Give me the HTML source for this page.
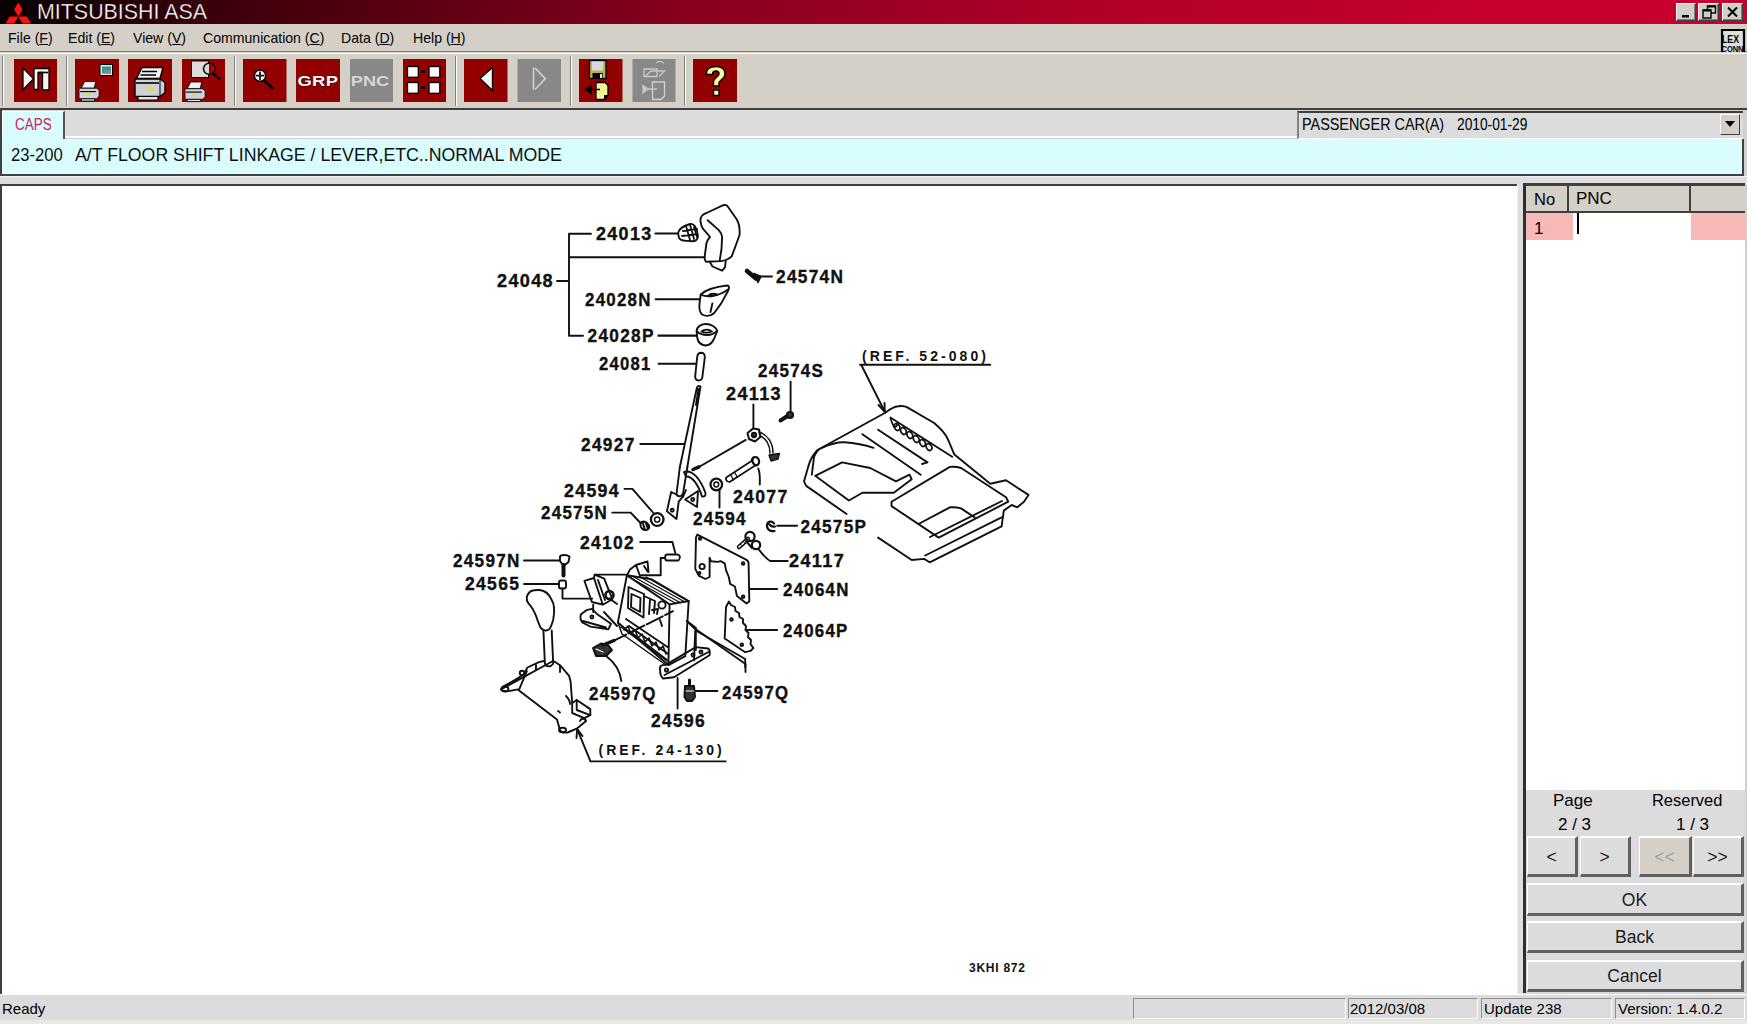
<!DOCTYPE html>
<html><head><meta charset="utf-8">
<style>
*{margin:0;padding:0;box-sizing:border-box}
html,body{width:1747px;height:1024px;overflow:hidden;background:#d4d0c8;font-family:"Liberation Sans",sans-serif;color:#000}
.a{position:absolute}
#title{left:0;top:0;width:1747px;height:24px;background:linear-gradient(90deg,#080000 0%,#3a000a 12%,#8a001f 40%,#b40029 65%,#c4002c 85%,#c8002e 100%)}
#title .t{left:36.5px;top:0px;font-size:22px;color:#fff;line-height:24px;-webkit-text-stroke:0.5px rgba(30,0,8,0.7);transform:scaleX(0.973);transform-origin:0 0}
.wb{top:3px;width:20px;height:18px;background:#d4d0c8;border-top:1px solid #fff;border-left:1px solid #fff;border-right:1px solid #404040;border-bottom:1px solid #404040;box-shadow:inset -1px -1px 0 #808080}
#menu{left:0;top:24px;width:1747px;height:28px;background:#d4d0c8;border-bottom:1px solid #808080}
#menu span{position:absolute;top:4px;font-size:15px;line-height:20px;transform:scaleX(0.94);transform-origin:0 0}
.tb{top:59px;width:43px;height:43px;background:#8b0000}
.tb.g{background:#8c8c8c}
.sep{top:56px;width:2px;height:50px;border-left:1px solid #808080;border-right:1px solid #fff}
.btn{background:#dcdcdc;border-top:2px solid #fff;border-left:1px solid #fff;border-right:3px solid #606060;border-bottom:3px solid #606060;font-size:17.5px;text-align:center;display:flex;align-items:center;justify-content:center;color:#202020;padding-top:2px}
.btn.dis{background:#d4d0c8;color:#a0a0a0}
.sp{top:998px;height:21px;border-top:1px solid #909090;border-left:1px solid #909090;border-bottom:1px solid #fff;border-right:1px solid #fff}
</style></head><body>
<div id="title" class="a">
  <svg class="a" style="left:4px;top:1px" width="28" height="23" viewBox="0 0 28 23">
    <polygon points="14.3,1.5 18.5,8.5 14.3,15.5 10.1,8.5" fill="#ff1010"/>
    <polygon points="14.3,15.5 10.1,22.5 1.5,22.5 5.7,15.5" fill="#ff1010"/>
    <polygon points="14.3,15.5 18.5,22.5 27,22.5 22.8,15.5" fill="#ff1010"/>
  </svg>
  <div class="a t">MITSUBISHI ASA</div>
  <div class="a wb" style="left:1676px"></div>
  <div class="a wb" style="left:1698px;width:21px"></div>
  <div class="a wb" style="left:1722px;width:21px"></div>
  <svg class="a" style="left:1676px;top:3px" width="68" height="18" viewBox="0 0 68 18">
    <rect x="6" y="12" width="7" height="2.5" fill="#000"/>
    <rect x="31.5" y="3" width="8" height="7" fill="none" stroke="#000" stroke-width="1.4"/>
    <rect x="31.5" y="2.5" width="8" height="2" fill="#000"/>
    <rect x="27" y="7" width="8" height="8" fill="#d4d0c8" stroke="#000" stroke-width="1.4"/>
    <rect x="27" y="6.5" width="8" height="2" fill="#000"/>
    <path d="M52,4.5 L61,13.5 M61,4.5 L52,13.5" stroke="#000" stroke-width="2"/>
  </svg>
</div>
<div id="menu" class="a">
  <span style="left:8px">File (<u>F</u>)</span>
  <span style="left:68px">Edit (<u>E</u>)</span>
  <span style="left:133px">View (<u>V</u>)</span>
  <span style="left:203px">Communication (<u>C</u>)</span>
  <span style="left:341px">Data (<u>D</u>)</span>
  <span style="left:413px">Help (<u>H</u>)</span>
  <svg class="a" style="left:1720px;top:4px" width="26" height="25" viewBox="0 0 26 25">
    <path d="M2,24 V2 H24 V24" fill="#dcdcdc" stroke="#000" stroke-width="2.2"/>
    <text x="2" y="15" font-family="Liberation Sans" font-weight="bold" font-size="10" textLength="17" lengthAdjust="spacingAndGlyphs" fill="#000">LEX</text>
    <text x="1.5" y="23.5" font-family="Liberation Sans" font-weight="bold" font-size="9" textLength="22" lengthAdjust="spacingAndGlyphs" fill="#000">CONN</text>
  </svg>
</div>
<!-- toolbar -->
<div class="a" style="left:0;top:53px;width:1747px;height:1px;background:#fff"></div>
<div class="a sep" style="left:2px"></div>
<div class="a sep" style="left:66px"></div>
<div class="a sep" style="left:234px"></div>
<div class="a sep" style="left:455px"></div>
<div class="a sep" style="left:570px"></div>
<div class="a sep" style="left:684px"></div>
<svg class="a" style="left:0;top:0" width="760" height="108" viewBox="0 0 760 108">
<g fill="#920000">
<rect x="14" y="59" width="43" height="43"/>
<rect x="75" y="59" width="44" height="43"/>
<rect x="128" y="59" width="44" height="43"/>
<rect x="182" y="59" width="43" height="43"/>
<rect x="243" y="59" width="43.5" height="43"/>
<rect x="296" y="59" width="44" height="43"/>
<rect x="403" y="59" width="43" height="43"/>
<rect x="464" y="59" width="43.5" height="43"/>
<rect x="579" y="59" width="43.5" height="43"/>
<rect x="693" y="59" width="44" height="43"/>
</g>
<g fill="#888">
<rect x="350" y="59" width="43" height="43"/>
<rect x="517.5" y="59" width="43.5" height="43"/>
<rect x="632.5" y="59" width="43" height="43"/>
</g>
<!-- exit icon -->
<path d="M23,68 L33.5,78.7 L23,89.8 Z" fill="#f4f4f4" stroke="#000" stroke-width="1.3"/>
<path d="M34,68.5 H49 V89.8 H42.5 V72.5 H38 V89.5 H34 Z" fill="#f4f4f4" stroke="#000" stroke-width="1.3"/>
<path d="M38.5,72.5 H48" stroke="#000" stroke-width="1.6"/>
<!-- print preview -->
<rect x="100" y="64.5" width="12.5" height="11" fill="#e8e8e8" stroke="#000" stroke-width="1"/>
<rect x="102" y="66.5" width="9" height="7" fill="#2a9a9a"/>
<rect x="104" y="70" width="7" height="3.5" fill="#7a8a90"/>
<g transform="translate(79,81.5) scale(0.56)">
<path d="M10,0 H30 L27,12 H4 Z" fill="#f0f0f0" stroke="#000" stroke-width="1.5"/>
<path d="M0,12 H32 L36,16 V26 L32,31 H0 Z" fill="#d0d0d8" stroke="#000" stroke-width="1.5"/>
<path d="M2,18 H30" stroke="#000" stroke-width="2"/><rect x="13" y="22" width="7" height="3" fill="#e0e020"/>
<path d="M4,31 H28 V35 H4 Z" fill="#e0e0e8" stroke="#000" stroke-width="1.5"/>
</g>
<!-- print -->
<g transform="translate(135,67.5)">
<path d="M7,0 H28 L25,11 H1.5 Z" fill="#f0f0f0" stroke="#000" stroke-width="1.4"/>
<path d="M7,4 H22 M5.5,7.5 H21" stroke="#000" stroke-width="1.5"/>
<path d="M0,11.5 H25 L30,15 V25 L25,29 H0 Z" fill="#cfcfd8" stroke="#000" stroke-width="1.4"/>
<path d="M25,11.5 V29" stroke="#000" stroke-width="1"/>
<path d="M1,15.5 H24" stroke="#000" stroke-width="1.6"/>
<rect x="13" y="20" width="5.5" height="2.8" fill="#e4e41a"/>
<path d="M3,29 H23 V32.5 H3 Z" fill="#e4e4ec" stroke="#000" stroke-width="1.2"/>
</g>
<!-- print w/ magnifier -->
<rect x="191.5" y="61" width="17" height="16.5" fill="#dcdcdc" stroke="#000" stroke-width="1"/>
<circle cx="209" cy="68.8" r="5.5" fill="#d8d8d8" stroke="#000" stroke-width="1.5"/>
<path d="M209,63.5 A5.3,5.3 0 0 1 209,74" fill="#960000"/>
<path d="M212.5,73 L220,79.5" stroke="#000" stroke-width="2.4"/>
<g transform="translate(185,82) scale(0.56)">
<path d="M10,0 H30 L27,12 H4 Z" fill="#f0f0f0" stroke="#000" stroke-width="1.5"/>
<path d="M0,12 H32 L36,16 V26 L32,31 H0 Z" fill="#d0d0d8" stroke="#000" stroke-width="1.5"/>
<path d="M2,18 H30" stroke="#000" stroke-width="2"/><rect x="13" y="22" width="7" height="3" fill="#e0e020"/>
<path d="M4,31 H28 V35 H4 Z" fill="#e0e0e8" stroke="#000" stroke-width="1.5"/>
</g>
<!-- zoom -->
<path d="M264,80.5 L273.5,89" stroke="#000" stroke-width="3"/>
<circle cx="260" cy="75.7" r="5.6" fill="#f4f4f4" stroke="#000" stroke-width="1.4"/>
<path d="M260,71.5 V80 M255.8,75.7 H264.2" stroke="#1a1a1a" stroke-width="1.8"/>
<!-- GRP / PNC -->
<text x="0" y="0" transform="translate(297.5,85.6) scale(1.32,1)" font-family="Liberation Sans" font-weight="bold" font-size="14" letter-spacing="0.2" fill="#f8f8f8" stroke="#200000" stroke-width="0.8" paint-order="stroke">GRP</text>
<text x="0" y="0" transform="translate(350.8,85.6) scale(1.3,1)" font-family="Liberation Sans" font-weight="bold" font-size="14" letter-spacing="0" fill="#d6d6d6">PNC</text>
<!-- 4 squares -->
<g fill="#fafafa" stroke="#000" stroke-width="1.3">
<rect x="407.5" y="66.5" width="10.8" height="10.8"/><rect x="429" y="66.5" width="10.8" height="10.8"/>
<rect x="407.5" y="82.5" width="10.8" height="10.8"/><rect x="429" y="82.5" width="10.8" height="10.8"/>
</g>
<path d="M421,71.8 L425,71.8 M421,87.8 H425" stroke="#000" stroke-width="2.5"/>
<!-- back -->
<path d="M480,78.4 L492.5,67.5 V90.5 Z" fill="#f4f4f4" stroke="#000" stroke-width="1.3"/>
<!-- fwd gray -->
<path d="M533.5,67.5 V89.8 M535,68 L545.3,78.6 L535,89.5" fill="none" stroke="#d0d0d0" stroke-width="1.6"/>
<!-- save -->
<rect x="589.5" y="60.5" width="16.5" height="18" fill="#b8b840" stroke="#000" stroke-width="1.3"/>
<rect x="592" y="61.5" width="11" height="9" fill="#d8d8e4"/>
<rect x="592.5" y="73" width="10.5" height="5.5" fill="#100018"/>
<rect x="600" y="74" width="2.3" height="4" fill="#e0e0f0"/>
<path d="M596,82.5 H605 L608,85.5 V95.5 L604.5,99.5 H596 Z" fill="#f4f49a" stroke="#000" stroke-width="1.3"/>
<path d="M604.5,99.5 V95.5 H608" fill="#000" stroke="#000" stroke-width="1"/>
<path d="M586,89.5 L591,85.5 V93.5 Z M590,89.5 H600" fill="#000" stroke="#000" stroke-width="1.5"/>
<!-- gray open -->
<path d="M644,69 H657 V76.5 H644 Z M645,76.5 L651,71 H664.5 L659,76.5" fill="none" stroke="#c8c8c8" stroke-width="1.3"/>
<path d="M656,63 C659,60.5 662,61 664,63.5" fill="none" stroke="#c8c8c8" stroke-width="1.2"/>
<path d="M652.5,82 H664.5 V96 L661,99.5 H652.5 Z" fill="none" stroke="#d0d0d0" stroke-width="1.3"/>
<path d="M643,85.5 L648,89 L643,93 Z M647,89 H657" fill="#c8c8c8" stroke="#c8c8c8" stroke-width="1.3"/>
<!-- help -->
<path d="M706.5,74.5 C706,68.5 711,66.5 716,66.5 C722.5,66.5 725.5,70 725,74.5 C724.5,78.5 720,80 719,82.5 V86 H713.5 V81.5 C714,77.5 719,77 719,74 C719,71.5 717.5,71 716,71 C714,71 712.5,72 712.5,74.5 Z" fill="#f8f8a0" stroke="#000" stroke-width="1.4"/>
<rect x="713.5" y="90" width="5.5" height="5.5" fill="#f8f8a0" stroke="#000" stroke-width="1.4"/>
</svg>
<!-- tab row -->
<div class="a" style="left:0;top:108px;width:1747px;height:2px;background:#404040"></div>
<div class="a" style="left:0;top:108px;width:2px;height:68px;background:#404040"></div>
<div class="a" style="left:65px;top:110px;width:1232px;height:28px;background:#dcdcdc;border-bottom:2px solid #fff"></div>
<div class="a" style="left:2px;top:111px;width:63px;height:30px;background:#d9fcfe;border-left:1px solid #fff;border-top:1px solid #fff;border-right:2px solid #505050"></div>
<div class="a" style="left:15px;top:114px;font-size:16px;line-height:22px;color:#d0205a;transform:scaleX(0.84);transform-origin:0 0">CAPS</div>
<!-- combo -->
<div class="a" style="left:1297px;top:111px;width:446px;height:28px;background:#dcdcdc;border-left:2px solid #808080;border-top:2px solid #404040;border-bottom:1px solid #fff"></div>
<div class="a" style="left:1302px;top:114px;font-size:16px;line-height:22px;transform:scaleX(0.9);transform-origin:0 0;white-space:pre">PASSENGER CAR(A)</div>
<div class="a" style="left:1457px;top:114px;font-size:16px;line-height:22px;transform:scaleX(0.86);transform-origin:0 0;white-space:pre">2010-01-29</div>
<div class="a" style="left:1720px;top:114px;width:20px;height:21px;background:#d4d0c8;border-top:1px solid #fff;border-left:1px solid #fff;border-right:1px solid #404040;border-bottom:1px solid #404040"></div>
<svg class="a" style="left:1724px;top:120px" width="12" height="8"><polygon points="1,1 11,1 6,7" fill="#000"/></svg>
<!-- cyan title bar -->
<div class="a" style="left:0;top:176px;width:1747px;height:8px;background:#dedede;border-top:1px solid #f4f4f4"></div>
<div class="a" style="left:2px;top:139px;width:1742px;height:37px;background:#d9fcfe;border-bottom:2px solid #404040;border-right:2px solid #404040"></div>
<div class="a" style="left:11px;top:143px;font-size:18px;line-height:24px;color:#101010;transform:scaleX(0.925);transform-origin:0 0;white-space:pre">23-200</div>
<div class="a" style="left:75px;top:143px;font-size:18px;line-height:24px;color:#101010;transform:scaleX(0.984);transform-origin:0 0;white-space:pre">A/T FLOOR SHIFT LINKAGE / LEVER,ETC..NORMAL MODE</div>
<!-- main diagram panel -->
<div class="a" style="left:0;top:184px;width:1517px;height:810px;background:#fff;border-top:2px solid #404040;border-left:2px solid #404040"></div>
<!--DIAGRAM--><svg class="a" style="left:0;top:0" width="1747" height="1024" viewBox="0 0 1747 1024">
<g font-family="Liberation Sans" font-weight="bold" font-size="17.5" letter-spacing="1.3" fill="#111" stroke="#111" stroke-width="0.35">
<text x="596" y="240" textLength="56.5" lengthAdjust="spacingAndGlyphs">24013</text>
<text x="497" y="287" textLength="57.0" lengthAdjust="spacingAndGlyphs">24048</text>
<text x="776" y="283" textLength="68.3" lengthAdjust="spacingAndGlyphs">24574N</text>
<text x="585" y="306" textLength="66.7" lengthAdjust="spacingAndGlyphs">24028N</text>
<text x="587.5" y="342" textLength="67.2" lengthAdjust="spacingAndGlyphs">24028P</text>
<text x="599" y="370" textLength="52.5" lengthAdjust="spacingAndGlyphs">24081</text>
<text x="758" y="377" textLength="66.2" lengthAdjust="spacingAndGlyphs">24574S</text>
<text x="726" y="400" textLength="56.0" lengthAdjust="spacingAndGlyphs">24113</text>
<text x="581" y="451" textLength="54.6" lengthAdjust="spacingAndGlyphs">24927</text>
<text x="564" y="497" textLength="56.0" lengthAdjust="spacingAndGlyphs">24594</text>
<text x="733" y="503" textLength="55.5" lengthAdjust="spacingAndGlyphs">24077</text>
<text x="541" y="519" textLength="67.0" lengthAdjust="spacingAndGlyphs">24575N</text>
<text x="693" y="525" textLength="53.8" lengthAdjust="spacingAndGlyphs">24594</text>
<text x="800.5" y="532.5" textLength="66.6" lengthAdjust="spacingAndGlyphs">24575P</text>
<text x="580" y="549" textLength="55.1" lengthAdjust="spacingAndGlyphs">24102</text>
<text x="789" y="566.5" textLength="56.1" lengthAdjust="spacingAndGlyphs">24117</text>
<text x="453" y="567" textLength="67.7" lengthAdjust="spacingAndGlyphs">24597N</text>
<text x="465" y="589.5" textLength="55.3" lengthAdjust="spacingAndGlyphs">24565</text>
<text x="783" y="596" textLength="66.7" lengthAdjust="spacingAndGlyphs">24064N</text>
<text x="783" y="637" textLength="65.5" lengthAdjust="spacingAndGlyphs">24064P</text>
<text x="589" y="700" textLength="67.7" lengthAdjust="spacingAndGlyphs">24597Q</text>
<text x="722" y="698.5" textLength="67.3" lengthAdjust="spacingAndGlyphs">24597Q</text>
<text x="651" y="727" textLength="55.0" lengthAdjust="spacingAndGlyphs">24596</text>
</g>
<g font-family="Liberation Sans" font-weight="bold" font-size="14" letter-spacing="3" fill="#111">
<text x="598.5" y="754.5">(REF. 24-130)</text>
<text x="862" y="360.5" textLength="127" lengthAdjust="spacing">(REF. 52-080)</text>
</g>
<text x="969" y="971.5" font-family="Liberation Sans" font-weight="bold" font-size="12" letter-spacing="0.75" fill="#111">3KHI 872</text>

<g fill="none" stroke="#111" stroke-width="1.9" stroke-linejoin="round" stroke-linecap="round">
<!-- bracket & leaders top -->
<path d="M591,233.8 H569 V335.7 H583 M557,281 H569 M569,257.3 H704.7 M655.4,233.5 H677"/>
<!-- 24013 insert -->
<path d="M678,233 C679,228 684,226 690,224 C694,223 697,228 698,236 C698,240 695,242 690,241 C685,241 681,241 679,238 Z" fill="#fff"/>
<path d="M686,226 L690,240 M690,224.5 L694,239 M694,227 L697,237 M683,231 L697,229 M682,236 L697,234" stroke-width="1.8"/>
<!-- knob -->
<path d="M700.5,221.4 C700,217 703,214 706.5,213 L723.3,205.2 C726,204.5 727.5,205.5 728.1,207 L736.5,219 C739,223 740,228 739.6,234.7 L735.3,246.7 L731.7,256.3 C729,259 725,260.5 720.9,261.1 L705.9,261.7 C704.5,260 704.5,258 704.7,256.3 L706.5,243 C707,240 708.5,238.5 710.1,237 L702.9,228.7 C701.5,226.5 700.8,224 700.5,221.4 Z"/>
<path d="M707.7,220.2 L718.5,229.9 C720.5,232 722,234 722.1,237 L721.5,249 L719.7,260.5"/>
<path d="M710,262.3 L712.5,266.5 L722.1,270.7 L725.1,267.1 L725.7,261.1"/>
<!-- 24574N -->
<path d="M759.4,276.5 H772"/>
<path d="M747,271 L756,278.5" stroke-width="4.6"/>
<path d="M754,273.5 L761,276.5 L758,282.5 Z" fill="#111" stroke-width="1.5"/>
<!-- 24028N -->
<path d="M655.6,299.3 H700"/>
<path d="M700.7,294.6 C706,289.5 718,286.5 727,285.5 C729.5,285.5 729.5,288 728,291 L721.2,303.4 L714.2,313 C711,316 706,316.5 702,314.5 C699.5,312 699,308 699.5,303.4 Z"/>
<path d="M700.7,294.6 C708,298 719,296 728,289.5"/>
<path d="M708,296 C710,294 714,293.5 717,294.5" />
<path d="M712.4,303.4 L710.5,312"/>
<!-- 24028P -->
<path d="M658.5,335.7 H696.6" stroke-width="2.3"/>
<path d="M696.6,331 C697,326 702,324 706,324 C711,324 716,327 717.3,331 L714,339 C712,343 709,345.5 705.5,345.5 C701,345 698,342 697.3,338 Z"/>
<path d="M697,331.5 C703,336.5 712,336 717,331"/>
<path d="M701.5,331.5 C704,329 709,329 712,331.5 C709,333 704,333 701.5,331.5 Z" />
<!-- 24081 -->
<path d="M658.5,363.8 H696"/>
<path d="M697.2,357 C697.5,353.5 699.5,352.8 701.5,352.8 C704,353 705,355 704.8,357.5 L702.3,377.5 C702,380 700.5,380.5 698.5,380.5 C696,380.2 695,378.5 695.2,376 Z"/>
<!-- lever rod 24927 -->
<path d="M696.8,388 C697,386 699,385.5 700.5,386.5 L687.3,467.3 M696.8,388 L679.8,467.3 M698.5,389 L696,405"/>
<path d="M640.3,444 H683.4"/>
<path d="M679.8,467.3 L676.5,494 C677,496 679,496.5 681,496 L683,494 L687.3,467.3"/>
<path d="M671.2,492 L666.9,511.3 L676.5,518.9 L678.7,501.7 L683,496.5 M671.2,492 L676.5,494.5"/>
<circle cx="672.2" cy="510.3" r="1.5"/>
<path d="M685.1,499.5 L698,491 L697,507 Z M683,497 L686,490"/>
<circle cx="692.7" cy="499.5" r="1.5"/>
<path d="M684,472 C692,469.5 700,478 705.5,493 C706,496 704,497 702,496.5 C698,484 692,476 686,476.5 Z"/>
<path d="M693,469.5 L699,466.8" stroke-width="3.5"/>
<!-- 24113 -->
<path d="M753.4,404.5 V429"/>
<path d="M747.5,433 L753,428.6 L759,429.5 L760.3,437 L755,441.5 L749,439 Z" fill="#fff" stroke-width="2"/><circle cx="754" cy="435" r="2.2" fill="#333"/>
<path d="M759,432 C768,435 773,443 773,453 M760.5,436 C766,438.5 770,445 770,453" stroke-width="1.5"/>
<path d="M769,455 L779.5,453.5 L778,459 L771,461 Z" fill="#333" stroke-width="1.3"/>
<path d="M745.8,439.9 L700.2,466.2"/>
<!-- 24574S -->
<path d="M790.6,381.6 V413.3"/>
<path d="M780.5,420.5 L789,415" stroke-width="4"/>
<circle cx="790" cy="415" r="3" stroke-width="2.2" fill="#333"/>
<!-- 24077 -->
<path d="M727,477 L753,460 M729.5,482 L756,465 M727,477 C725,478 726,482 729.5,482" stroke-width="1.7"/>
<path d="M731,475.5 L733.5,480 M735,473 L737.5,477.5" stroke-width="1.3"/>
<path d="M752,459.5 C753,456.5 757,456.5 758.5,459 C760,462 759,465 756,465.5 C754,465 752.5,462.5 752,459.5 Z" stroke-width="2.2"/>
<path d="M758.2,468.4 C760,472 760,478 759.8,484.5"/>
<!-- 24594 washers -->
<circle cx="716.3" cy="484.5" r="5.8" stroke-width="2.2"/><circle cx="716.3" cy="484.5" r="2.4" stroke-width="1.5"/>
<path d="M719.5,489.8 V507.6"/>
<circle cx="657.2" cy="519.5" r="6.3" stroke-width="2.3"/><circle cx="657.2" cy="519.5" r="2.6" stroke-width="1.5"/>
<path d="M624.5,488.9 H632.4 L653,512.5"/>
<!-- 24575N -->
<path d="M612.2,512.6 H630.7 L640,522.5"/>
<path d="M640.5,525 C640,521.5 644,520.5 647,523 C650,525.5 650,529.5 646,530 C643,530.5 640.5,528 640.5,525 Z M642.5,522 L645,530 M645.5,522 L648,529" stroke-width="2"/>
<!-- 24102 -->
<path d="M640.2,542 H672.4 L675.3,553"/>
<path d="M667,554.5 H677 C680,554.5 681,557.5 678.5,560.5 H667 C664.5,560.5 664.5,554.5 667,554.5 Z"/>
<path d="M665,558 H660.7 V575.2 H641"/>
<!-- 24597N / 24565 -->
<path d="M524,560.5 H559.5"/>
<path d="M560,556.5 C561,554.5 567,554.5 569.5,556.5 L568.5,562 L565.5,564.5 L562.5,564.5 L560,561 Z"/>
<path d="M563.5,565 V575.5" stroke-width="4"/>
<path d="M524,584 H558.5"/>
<rect x="559" y="580.5" width="7" height="8" rx="2"/>
<path d="M562.5,588.5 V598.6 H592.3"/>
<!-- shift lever assembly (REF 24-130) -->
<path d="M526.8,597.1 C528,593 531,590.5 534.3,590.3 C538,589.8 541,590 543.4,591 C547,592.5 549.5,595.5 551,598.6 C553,602 554,605 554,607.7 C554.5,612 554,616 553.2,619.8 C552,624 551,627 549.5,628.9 C548,630.5 546.5,630.8 544.9,630.4 C543,630 541.5,629 540.4,627.4 C538.5,623 537,619 535.8,615.3 C533.5,610 531,606 528.3,603.2 C527,601.5 526.5,599.5 526.8,597.1 Z"/>
<path d="M543.4,630.4 L544.9,663.7 M551.7,630.4 L553.2,663.7 M544.9,663.7 C545.5,667 550.5,667.5 553.2,663.7"/>
<path d="M501,689.4 L519.2,677.3 L523.7,674.3 L527.5,667.5 L538.9,662.2 L544,661 M553,661 L555.5,662.2 L560,665.2 L569.1,675.8 L570.6,681.8 L572.2,703 L576.7,700 L590.3,709.1 L590.3,715.1 L584.3,718.1 L585.8,721.2 L576.7,728.7 L567.6,732.5 C564,733 561,732 560,730.2 L557,719.6 L517.7,689.4 L510.1,690.9 C506,691.5 502,691 501,689.4 Z"/>
<path d="M519.2,689.4 L526.8,671.2 M503,686.5 L518,678.5 M572.2,703 L572.2,713 L584.3,718.1 M576.7,700 L576.7,710 L590.3,715.1 M536,665 L536,670 M560,666 L560,672 M566,696 C569,699 570,702 570,704"/>
<circle cx="522" cy="673" r="2.2"/>
<ellipse cx="505" cy="689" rx="3.5" ry="2.5"/>
<ellipse cx="562.5" cy="730" rx="3.5" ry="2.3"/>
<path d="M580,721 C581,718 585,718 586,720.5"/>
<path d="M558,711 L560,712.5"/>
<path d="M590.5,761.4 H725.7 M590.5,761.4 L577.2,729.2"/>
<path d="M577.2,729.2 L576.5,738 M577.2,729.2 L582.5,736" stroke-width="1.9"/>
<!-- housing 24596 -->
<path d="M581,614.3 L586.4,610.2 L591.9,608.8 L597.3,614.3 L611,623.8 L608.3,629.3 L590.5,626.6 L582.3,622.5 C580.5,620 580,617 581,614.3 Z M583,621 L606,627.5"/>
<circle cx="591.9" cy="617" r="1.5"/>
<path d="M593.2,604.7 V612"/>
<path d="M584.4,580.8 L594,578 L602.8,604.7 L591.9,602 Z M594.6,574.6 L604.2,578.7 L612.4,599.2 L602.8,604.7 M594.6,574.6 L594,578 M594.6,574.6 H626 M598,580 L605,600"/>
<circle cx="609.5" cy="595" r="4" stroke-width="2.6"/>
<path d="M604,612 L617,626 M611.5,600 L617,604"/>
<!-- box -->
<path d="M626.9,575.2 L669.6,604.4 L668.4,665.1 L617.9,622.4 Z"/>
<path d="M669.6,604.4 L688.7,601 L685.3,656.1 L668.4,665.1"/>
<path d="M626.9,575.2 L651.6,579.2 L688.7,601"/>
<path d="M629,577 L676,603.5 M633,576.5 L680,602.5 M641,577.5 L684,601.5 M646,577 L686,600" stroke-width="1.4"/>
<path d="M626.9,575.2 L630,569.6 L636,565 L647.5,561.5 L648.5,572 M636,565 L640,576 M644,566 L648,572"/>
<path d="M628.5,587 L644,594 L643.5,617.5 L628,608 Z M631.5,594 L631,607 L640,612 L640.5,598 Z"/>
<path d="M644,596 L655,601 L654,613 M650,600 L649,614"/>
<circle cx="662" cy="605" r="3.6"/>
<path d="M652,610 L658,609 L657,614 M660,620 L662,626"/>
<path d="M626,619 L667.5,647 M629,626 L667.5,653.5 M633,634 L667,660"/>
<path d="M621,627 L667,661 M617.9,622.4 L622,634 L666,665" stroke-width="1.5"/>
<path d="M624,630 L628,626 L631,634 L635,630 L638,638 L642,634 L645,642 L649,638 L652,646 L656,642 L659,650 L663,646 L666,654" stroke-width="1.6"/>
<path d="M610,642.6 L673,611.2" stroke-dasharray="18,2.5"/>
<path d="M593,648 L601,643.5 L608,645 L612,650 L606,656 L596,656 Z" fill="#333" stroke-width="2"/><path d="M603,645 L614,640.5" stroke-width="3.5"/><path d="M596,649 L603,652" stroke="#fff" stroke-width="1.2"/>
<path d="M607,656.7 C614,662 620,670 621.3,681"/>
<!-- foot plate -->
<path d="M660.2,670.3 C659,666 662,664.5 665.7,664.9 L695.8,647.1 L708.1,648.5 C710,650 710,653 709.5,655.3 L674,677.2 L663,678.5 C660.5,676 660,673 660.2,670.3 Z M664.5,675 L708.5,652"/>
<circle cx="666.5" cy="670" r="1.6"/><circle cx="693" cy="655" r="1.5"/><circle cx="701" cy="652" r="1.5"/>
<path d="M695.8,629.3 L745.5,664 L745.5,672 M695.8,629.3 L695.8,650 M686.9,621 L696,628"/>
<!-- right plates -->
<path d="M697.3,534.6 L745.2,559.2 C747,560 748.5,561.5 748.6,563.3 L749.3,601.6 L746.5,603.6 L737,596.1 L734.9,586.5 L730.1,583.8 L728.8,577 L726,570.1 L724.7,563.3 L720.6,561.2 L717.8,561.9 L711,561.2 L709.6,557.8 L709.6,577 L705.5,579 L698.7,575.6 L695.3,568.8 L696,537.3 Z"/>
<circle cx="702.1" cy="566.5" r="2.6"/><circle cx="700" cy="538.7" r="1.2"/><circle cx="743.1" cy="563.5" r="1.3"/><circle cx="743.1" cy="596.8" r="1.3"/><circle cx="699.5" cy="573" r="1"/>
<path d="M750.2,589 H777.2"/>
<path d="M728.8,601.6 L731,605 L735,607 L735.5,611 L739,613 L739.5,617 L743,619 L743,623 L746,626 L745.5,630 L748.5,633 L748,637 L751,640 L750.5,644 L753.4,648.1 L750.6,650.8 L745.2,652.2 L724.7,638.5 L726,607 Z"/>
<circle cx="731.5" cy="619.4" r="1.3"/><circle cx="741.8" cy="644.7" r="1.3"/>
<path d="M746.7,630 H777.2"/>
<path d="M695.3,630.3 L745.2,659 L745.2,667 M695.3,630.3 L694,660.4 M686.9,621 L695,629"/>
<!-- 24117 / 24575P -->
<path d="M739,547 L748,539" stroke-width="4.5"/>
<path d="M739,547 L748,539" stroke="#fff" stroke-width="1.5" stroke-dasharray="2,2"/>
<circle cx="750" cy="536.5" r="4.6" stroke-width="2.2"/>
<circle cx="756" cy="545" r="4.2" stroke-width="2.2"/>
<path d="M746,541 L752,548" stroke-width="2"/>
<path d="M758.4,549.2 C762,553 765,558 770.1,561 H787.7"/>
<path d="M774,523.5 C772,520.5 767.5,521 767,525 C766.5,529 770,532 774.5,531 M769.5,524.5 C771,526.5 773,527 775,526.5" stroke-width="2.2"/>
<path d="M777.2,525.8 H797.1"/>
<!-- 24597Q right -->
<path d="M689.5,680 V686" stroke-width="3"/><path d="M685,686 H694 L695,697 L692,701 H687 L684.5,697 Z" fill="#333" stroke-width="2"/><path d="M686,691 H694" stroke="#fff" stroke-width="1.2"/>
<path d="M695.2,691 H717.4"/>
<path d="M677.6,678 V708.6"/>
<!-- console REF 52-080 -->
<path d="M860,364.7 H990.3 M861.2,364.7 L884.8,411.8"/>
<path d="M884.8,411.8 L878.5,405 M884.8,411.8 L884.5,403" stroke-width="1.9"/>
<path d="M884.8,413 C890,409 894,406.5 898.3,406.2 C902,405.8 905,406 907.3,407.4 L934.2,423 C940,428 945,433 947.7,438.8 C950,444 952,449 954.4,454.5 L990.3,483.7 L1006,480.3 L1028.5,494.9 L1024,501.7 L1017.3,507.3 L1011.7,505 L1003.8,510.6 L1001.6,526.4 L929.7,562.3 L924.1,558.9 L911.7,560 L878.1,537.6"/>
<path d="M884.8,413 L817.5,450 C813,455 810,460 808.5,465.7 L804,481.4 L806.2,485.9 L846.6,514"/>
<path d="M811.8,474.7 L814.1,456.7 C816,452 818,449 822,447.8 C830,444 838,442 844.4,442.2 C855,443 865,445 873.6,447.8"/>
<path d="M815.2,475.8 L842.1,462.4 L870.2,468 L896,481.4 L909.5,474.7 L911.7,479.2 L893.8,492.7 L862.4,492.7 L848.9,500.5 Z"/>
<path d="M862.4,434.3 L920.7,474.7 M878.1,429.8 L927.5,462.4 L922,464 M890.4,417.5 L952.2,456.7"/>
<path d="M890.5,418.5 L893,425 C894,428 896,427 897,425" stroke-width="1.8"/>
<ellipse cx="897.0" cy="427.0" rx="2.6" ry="3.6" transform="rotate(-30 897.0 427.0)" stroke-width="1.7"/>
<ellipse cx="903.4" cy="431.0" rx="2.6" ry="3.6" transform="rotate(-30 903.4 431.0)" stroke-width="1.7"/>
<ellipse cx="909.8" cy="435.0" rx="2.6" ry="3.6" transform="rotate(-30 909.8 435.0)" stroke-width="1.7"/>
<ellipse cx="916.2" cy="439.0" rx="2.6" ry="3.6" transform="rotate(-30 916.2 439.0)" stroke-width="1.7"/>
<ellipse cx="922.6" cy="443.0" rx="2.6" ry="3.6" transform="rotate(-30 922.6 443.0)" stroke-width="1.7"/>
<ellipse cx="929.0" cy="447.0" rx="2.6" ry="3.6" transform="rotate(-30 929.0 447.0)" stroke-width="1.7"/>
<path d="M891.5,501.7 L949.9,466.9 C955,466.5 958,467 961.1,468 L1006,497.2 L1008.3,501.7 L938.7,537.6 L891.5,506.1 Z"/>
<path d="M918.5,524 L949.9,507.3 C955,507 958,507.5 961.1,508.4 L974.6,517.4 M1001.6,517.4 L925.2,555.5 M930,537 L1002,501"/>
</g>
</svg>
<!--/DIAGRAM-->
<!-- right panel -->
<div class="a" style="left:1517px;top:184px;width:7px;height:810px;background:#dedede;border-left:1px solid #f4f4f4"></div>
<div class="a" style="left:1523px;top:183px;width:222px;height:810px;background:#fff;border-top:3px solid #404040;border-left:3px solid #303030"></div>
<div class="a" style="left:1526px;top:186px;width:219px;height:27px;background:#d4d0c8;border-bottom:2px solid #404040"></div>
<div class="a" style="left:1567px;top:186px;width:2px;height:26px;background:#404040"></div>
<div class="a" style="left:1689px;top:186px;width:2px;height:26px;background:#404040"></div>
<div class="a" style="left:1534px;top:188px;font-size:16.5px;line-height:22px">No</div>
<div class="a" style="left:1576px;top:188px;font-size:17px;line-height:22px">PNC</div>
<div class="a" style="left:1526px;top:213px;width:47px;height:27px;background:#f8b8b8"></div>
<div class="a" style="left:1691px;top:213px;width:54px;height:27px;background:#f8b8b8"></div>
<div class="a" style="left:1534px;top:218px;font-size:17px;line-height:22px">1</div>
<div class="a" style="left:1577px;top:213px;width:2px;height:21px;background:#000"></div>
<div class="a" style="left:1526px;top:790px;width:219px;height:203px;background:#dcdcdc"></div>
<div class="a" style="left:1553px;top:790px;font-size:17px;line-height:22px">Page</div>
<div class="a" style="left:1558px;top:814px;font-size:17px;line-height:22px;white-space:pre">2 / 3</div>
<div class="a" style="left:1652px;top:790px;font-size:17px;line-height:22px;transform:scaleX(0.967);transform-origin:0 0">Reserved</div>
<div class="a" style="left:1676px;top:814px;font-size:17px;line-height:22px;white-space:pre">1 / 3</div>
<div class="a btn" style="left:1527px;top:836px;width:51px;height:41px">&lt;</div>
<div class="a btn" style="left:1580px;top:836px;width:51px;height:41px">&gt;</div>
<div class="a btn dis" style="left:1639px;top:836px;width:53px;height:41px">&lt;&lt;</div>
<div class="a btn" style="left:1693px;top:836px;width:51px;height:41px">&gt;&gt;</div>
<div class="a btn" style="left:1527px;top:883px;width:217px;height:33px">OK</div>
<div class="a btn" style="left:1527px;top:921px;width:217px;height:32px">Back</div>
<div class="a btn" style="left:1527px;top:960px;width:217px;height:32px">Cancel</div>
<!-- status bar -->
<div class="a" style="left:0;top:994px;width:1747px;height:30px;background:#dcdcdc;border-top:1px solid #fff"></div>
<div class="a" style="left:2px;top:999px;font-size:15px;line-height:20px">Ready</div>
<div class="a sp" style="left:1133px;width:213px"></div>
<div class="a sp" style="left:1348px;width:130px"></div>
<div class="a sp" style="left:1481px;width:131px"></div>
<div class="a sp" style="left:1615px;width:130px"></div>
<div class="a" style="left:1350px;top:999px;font-size:15px;line-height:20px">2012/03/08</div>
<div class="a" style="left:1484px;top:999px;font-size:15px;line-height:20px">Update 238</div>
<div class="a" style="left:1618px;top:999px;font-size:15px;line-height:20px">Version: 1.4.0.2</div>
<div class="a" style="left:0;top:1020px;width:1747px;height:4px;background:#e8e8e4"></div>

</body></html>
